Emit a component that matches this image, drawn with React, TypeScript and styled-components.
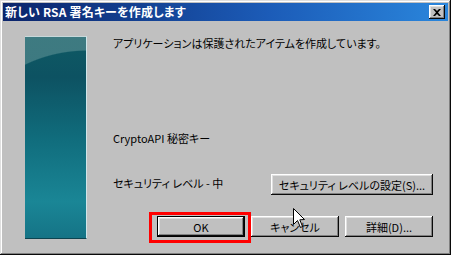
import * as React from "react";
import styled, { createGlobalStyle } from "styled-components";

const GlobalStyle = createGlobalStyle`
  html, body {
    margin: 0;
    padding: 0;
    background: #c0c0c0;
  }
  body {
    font-family: "Noto Sans CJK JP", "Liberation Sans", sans-serif;
    font-size: 11px;
    font-feature-settings: "palt";
  }
`;

const WindowFrame = styled.div`
  position: relative;
  width: 451px;
  height: 255px;
  box-sizing: border-box;
  padding: 3px;
  display: flex;
  flex-direction: column;
  background: #c0c0c0;
  box-shadow: inset -1px -1px #0a0a0a, inset 1px 1px #dfdfdf,
    inset -2px -2px #808080, inset 2px 2px #ffffff;
`;

const TitleBar = styled.div`
  height: 18px;
  display: flex;
  align-items: center;
  justify-content: space-between;
  padding: 0 3px 0 2px;
  background: linear-gradient(90deg, #0a246a 0%, #1c5cb8 60%, #2a86dc 100%);
`;

const TitleText = styled.span`
  color: #ffffff;
  font-weight: bold;
  font-size: 12px;
  line-height: 18px;
  letter-spacing: 0.2px;
`;

const CloseButton = styled.button`
  width: 16px;
  height: 14px;
  padding: 0;
  border: none;
  display: flex;
  align-items: center;
  justify-content: center;
  background: #c0c0c0;
  box-shadow: inset -1px -1px #0a0a0a, inset 1px 1px #ffffff,
    inset -2px -2px #808080, inset 2px 2px #dfdfdf;
`;

const Body = styled.div`
  flex: 1;
  display: flex;
  padding: 15px 0 0 22px;
`;

const SidePanel = styled.div`
  width: 62px;
  height: 203px;
  box-sizing: border-box;
  border-right: 1px solid #cfe6ea;
  border-top: 1px solid #c8d8da;
  border-bottom: 1px solid #0c4450;
  background: radial-gradient(
      ellipse 130px 116px at 62px 129px,
      rgba(0, 0, 0, 0) 99%,
      rgba(70, 128, 134, 0.85) 100%
    ),
    linear-gradient(180deg, #0e5a64 0%, #0d5262 20%, #106c7c 50%, #1a8696 82%, #157486 100%);
`;

const Content = styled.div`
  margin-left: 26px;
  width: 320px;
  display: flex;
  flex-direction: column;
  color: #000000;
`;

const Line = styled.div<{ $top: number }>`
  margin-top: ${(p) => p.$top}px;
  height: 14px;
  line-height: 14px;
  white-space: nowrap;
`;

const SecurityRow = styled.div`
  margin-top: 29px;
  height: 21px;
  display: flex;
  align-items: center;
  justify-content: space-between;

  & > span {
    margin-bottom: 4px;
  }
`;

const ButtonRow = styled.div`
  margin-top: 21px;
  display: flex;
  justify-content: flex-end;
  gap: 6px;
`;

const Button = styled.button<{ $width: number; $default?: boolean }>`
  width: ${(p) => p.$width}px;
  height: 21px;
  padding: 0;
  font-family: inherit;
  font-size: 11px;
  font-feature-settings: "palt";
  color: #000000;
  background: #c0c0c0;
  border: ${(p) => (p.$default ? "1px solid #000000" : "none")};
  box-shadow: inset -1px -1px #0a0a0a, inset 1px 1px #ffffff,
    inset -2px -2px #808080, inset 2px 2px #dfdfdf;
`;

const Highlight = styled.span`
  position: relative;
  display: inline-flex;
  &::after {
    content: "";
    position: absolute;
    left: -8px;
    right: -6px;
    top: -4px;
    bottom: -6px;
    border: 3px solid #ff0000;
    pointer-events: none;
  }
`;

const Pointer = styled.svg`
  position: absolute;
  left: 293px;
  top: 208px;
`;

const App = () => {
  return (
    <>
      <GlobalStyle />
      <WindowFrame>
        <TitleBar>
          <TitleText>新しい RSA 署名キーを作成します</TitleText>
          <CloseButton aria-label="close">
            <svg width="8" height="7" viewBox="0 0 8 7">
              <path d="M0 0h2l2 2 2-2h2L5 3.5 8 7H6L4 5 2 7H0l3-3.5z" fill="#000" />
            </svg>
          </CloseButton>
        </TitleBar>
        <Body>
          <SidePanel />
          <Content>
            <Line $top={0}>アプリケーションは保護されたアイテムを作成しています。</Line>
            <Line $top={81}>CryptoAPI 秘密キー</Line>
            <SecurityRow>
              <span>セキュリティ レベル - 中</span>
              <Button $width={162}>セキュリティ レベルの設定(S)...</Button>
            </SecurityRow>
            <ButtonRow>
              <Highlight>
                <Button $width={88} $default>
                  OK
                </Button>
              </Highlight>
              <Button $width={88}>キャンセル</Button>
              <Button $width={88}>詳細(D)...</Button>
            </ButtonRow>
          </Content>
        </Body>
        <Pointer width="13" height="21" viewBox="0 0 13 21">
          <path
            d="M0.5 0.5 L0.5 16.5 L4.5 12.5 L7.5 19.5 L9.5 18.5 L6.8 11.8 L11.5 11.5 Z"
            fill="#ffffff"
            stroke="#000000"
            strokeWidth="1"
          />
        </Pointer>
      </WindowFrame>
    </>
  );
};

export default App;
